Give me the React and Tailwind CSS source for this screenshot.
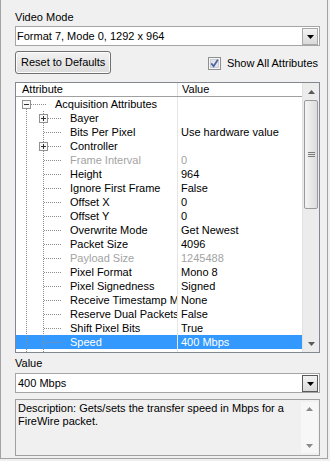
import React from 'react';

const rows = [
  { name: 'Bayer', box: true, value: '' },
  { name: 'Bits Per Pixel', value: 'Use hardware value' },
  { name: 'Controller', box: true, value: '' },
  { name: 'Frame Interval', value: '0', disabled: true },
  { name: 'Height', value: '964' },
  { name: 'Ignore First Frame', value: 'False' },
  { name: 'Offset X', value: '0' },
  { name: 'Offset Y', value: '0' },
  { name: 'Overwrite Mode', value: 'Get Newest' },
  { name: 'Packet Size', value: '4096' },
  { name: 'Payload Size', value: '1245488', disabled: true },
  { name: 'Pixel Format', value: 'Mono 8' },
  { name: 'Pixel Signedness', value: 'Signed' },
  { name: 'Receive Timestamp Mode', value: 'None' },
  { name: 'Reserve Dual Packets', value: 'False' },
  { name: 'Shift Pixel Bits', value: 'True' },
  { name: 'Speed', value: '400 Mbps', selected: true },
];

const DOT = '#8c8c8c';

function Dots({ x1, y1, x2, y2 }) {
  return <line x1={x1} y1={y1} x2={x2} y2={y2} stroke={DOT} strokeWidth="1" strokeDasharray="1 1" shapeRendering="crispEdges" />;
}

function ExpandBox({ x, plus }) {
  return (
    <g shapeRendering="crispEdges">
      <rect x={x + 0.5} y="3.5" width="8" height="8" fill="#f8f8f8" stroke="#919191" />
      <line x1={x + 2} y1="7.5" x2={x + 7} y2="7.5" stroke="#2f2f2f" />
      {plus && <line x1={x + 4.5} y1="5" x2={x + 4.5} y2="10" stroke="#2f2f2f" />}
    </g>
  );
}

function DropButton({ dark }) {
  return (
    <div
      className={`w-[16px] h-[17px] mr-[1px] flex items-center justify-center border bg-gradient-to-b from-[#f3f3f3] to-[#dadada] ${
        dark ? 'border-[#5a5a5a]' : 'border-[#a9a9a9]'
      }`}
    >
      <svg width="7" height="4" className="mt-[1px]">
        <polygon points="0,0 7,0 3.5,4" fill="#000" />
      </svg>
    </div>
  );
}

function Combo({ value, dark }) {
  return (
    <div className="w-[305px] h-[20px] border border-[#a5a5a5] bg-white flex items-center">
      <div className="flex-1 pl-[1px] whitespace-nowrap">{value}</div>
      <DropButton dark={dark} />
    </div>
  );
}

function Arrow({ up, color }) {
  return (
    <svg width="7" height="4">
      <polygon points={up ? '0,4 7,4 3.5,0' : '0,0 7,0 3.5,4'} fill={color} />
    </svg>
  );
}

function TreeRow({ row }) {
  const sel = row.selected;
  return (
    <div className={`flex h-[14px] ${sel ? 'bg-[#3399ff] text-white' : ''}`}>
      <div className="w-[161px] flex items-center overflow-hidden whitespace-nowrap">
        <svg width="54" height="14" className="shrink-0">
          <Dots x1="10.5" y1="0" x2="10.5" y2="14" />
          <Dots x1="27.5" y1="0" x2="27.5" y2="14" />
          {row.box ? (
            <>
              <Dots x1="32" y1="7.5" x2="46" y2="7.5" />
              <ExpandBox x={23} plus />
            </>
          ) : (
            <Dots x1="28" y1="7.5" x2="46" y2="7.5" />
          )}
        </svg>
        <span className={row.disabled ? 'text-[#a3a3a3]' : ''}>{row.name}</span>
      </div>
      <div className="w-px bg-[#e6e6e6]" />
      <div className={`w-[124px] pl-[3px] flex items-center whitespace-nowrap ${row.disabled ? 'text-[#a3a3a3]' : ''}`}>
        {row.value}
      </div>
    </div>
  );
}

export default function App() {
  return (
    <div className="w-[330px] h-[461px] bg-[#f0f0f0] font-['Liberation_Sans',Arial,sans-serif] text-[11px] leading-[13px] text-black">
      <div className="w-[328px] h-[459px] border-x border-b border-[#a3a3a3] pl-[14px] pt-[11px] flex flex-col">
        <div className="h-[13px]">Video Mode</div>
        <div className="mt-[2px]">
          <Combo value="Format 7, Mode 0, 1292 x 964" />
        </div>

        <div className="mt-[5px] w-[305px] flex items-center justify-between pr-[2px]">
          <button className="w-[96px] h-[23px] rounded-[3px] border border-[#707070] bg-gradient-to-b from-[#f2f2f2] to-[#dcdcdc] text-left pl-[5px] shadow-[inset_0_0_0_1px_#fcfcfc]">
            Reset to Defaults
          </button>
          <div className="flex items-center gap-[6px] mt-[1px]">
            <svg width="13" height="13" shapeRendering="crispEdges">
              <rect x="0.5" y="0.5" width="12" height="12" fill="#f6f6f6" stroke="#8e8f8f" />
              <rect x="2.5" y="2.5" width="8" height="8" fill="#e2e5ea" stroke="#c9ced6" />
              <path d="M3.3 6.4 L5.6 9.2 L9.8 2.8" stroke="#4d62a0" strokeWidth="1.7" fill="none" shapeRendering="auto" />
            </svg>
            <span>Show All Attributes</span>
          </div>
        </div>

        <div className="mt-[8px] w-[305px] h-[271px] border border-[#828790] bg-white flex">
          <div className="w-[286px] flex flex-col">
            <div className="flex h-[14px] border-b border-[#a0a0a0]">
              <div className="w-[161px] pl-[6px]">Attribute</div>
              <div className="w-px bg-[#e0e0e0]" />
              <div className="w-[124px] pl-[4px]">Value</div>
            </div>
            <div className="flex h-[14px]">
              <div className="w-[161px] flex items-center whitespace-nowrap">
                <svg width="39" height="14" className="shrink-0">
                  <Dots x1="10.5" y1="12" x2="10.5" y2="14" />
                  <Dots x1="15" y1="7.5" x2="31" y2="7.5" />
                  <ExpandBox x={6} />
                </svg>
                <span>Acquisition Attributes</span>
              </div>
              <div className="w-px bg-[#e6e6e6]" />
              <div className="w-[124px]" />
            </div>
            {rows.map((r) => (
              <TreeRow key={r.name} row={r} />
            ))}
            <div className="flex flex-1">
              <svg width="161" height="3">
                <Dots x1="10.5" y1="0" x2="10.5" y2="3" />
                <Dots x1="27.5" y1="0" x2="27.5" y2="3" />
              </svg>
              <div className="w-px bg-[#e6e6e6]" />
            </div>
          </div>

          <div className="w-[17px] flex flex-col bg-[#ececec] border-l border-[#e2e2e2]">
            <div className="h-[17px] flex items-center justify-center">
              <Arrow up color="#5a5a5a" />
            </div>
            <div className="flex-1">
              <div className="mx-[1px] h-[109px] rounded-[2px] border border-[#9a9a9a] bg-gradient-to-r from-[#f4f4f4] to-[#dcdcdc] flex flex-col items-center justify-center gap-[1px]">
                <div className="w-[7px] h-px bg-[#7a7a7a]" />
                <div className="w-[7px] h-px bg-[#7a7a7a]" />
                <div className="w-[7px] h-px bg-[#7a7a7a]" />
              </div>
            </div>
            <div className="h-[17px] flex items-center justify-center">
              <Arrow color="#5a5a5a" />
            </div>
          </div>
        </div>

        <div className="mt-[4px] h-[13px]">Value</div>
        <div className="mt-[3px]">
          <Combo value={<span className="pl-[1px]">400 Mbps</span>} dark />
        </div>

        <div className="mt-[6px] w-[305px] h-[57px] border border-[#a0a0a0] flex">
          <div className="flex-1 pl-[2px] pt-[2px] whitespace-nowrap">
            Description: Gets/sets the transfer speed in Mbps for a
            <br />
            FireWire packet.
          </div>
          <div className="mt-[2px] mr-[1px] w-[17px] h-[51px] bg-[#f7f7f7] flex flex-col justify-between">
            <div className="h-[14px] flex items-center justify-center">
              <Arrow up color="#8a8a8a" />
            </div>
            <div className="h-[14px] flex items-center justify-center">
              <Arrow color="#8a8a8a" />
            </div>
          </div>
        </div>
      </div>
    </div>
  );
}
